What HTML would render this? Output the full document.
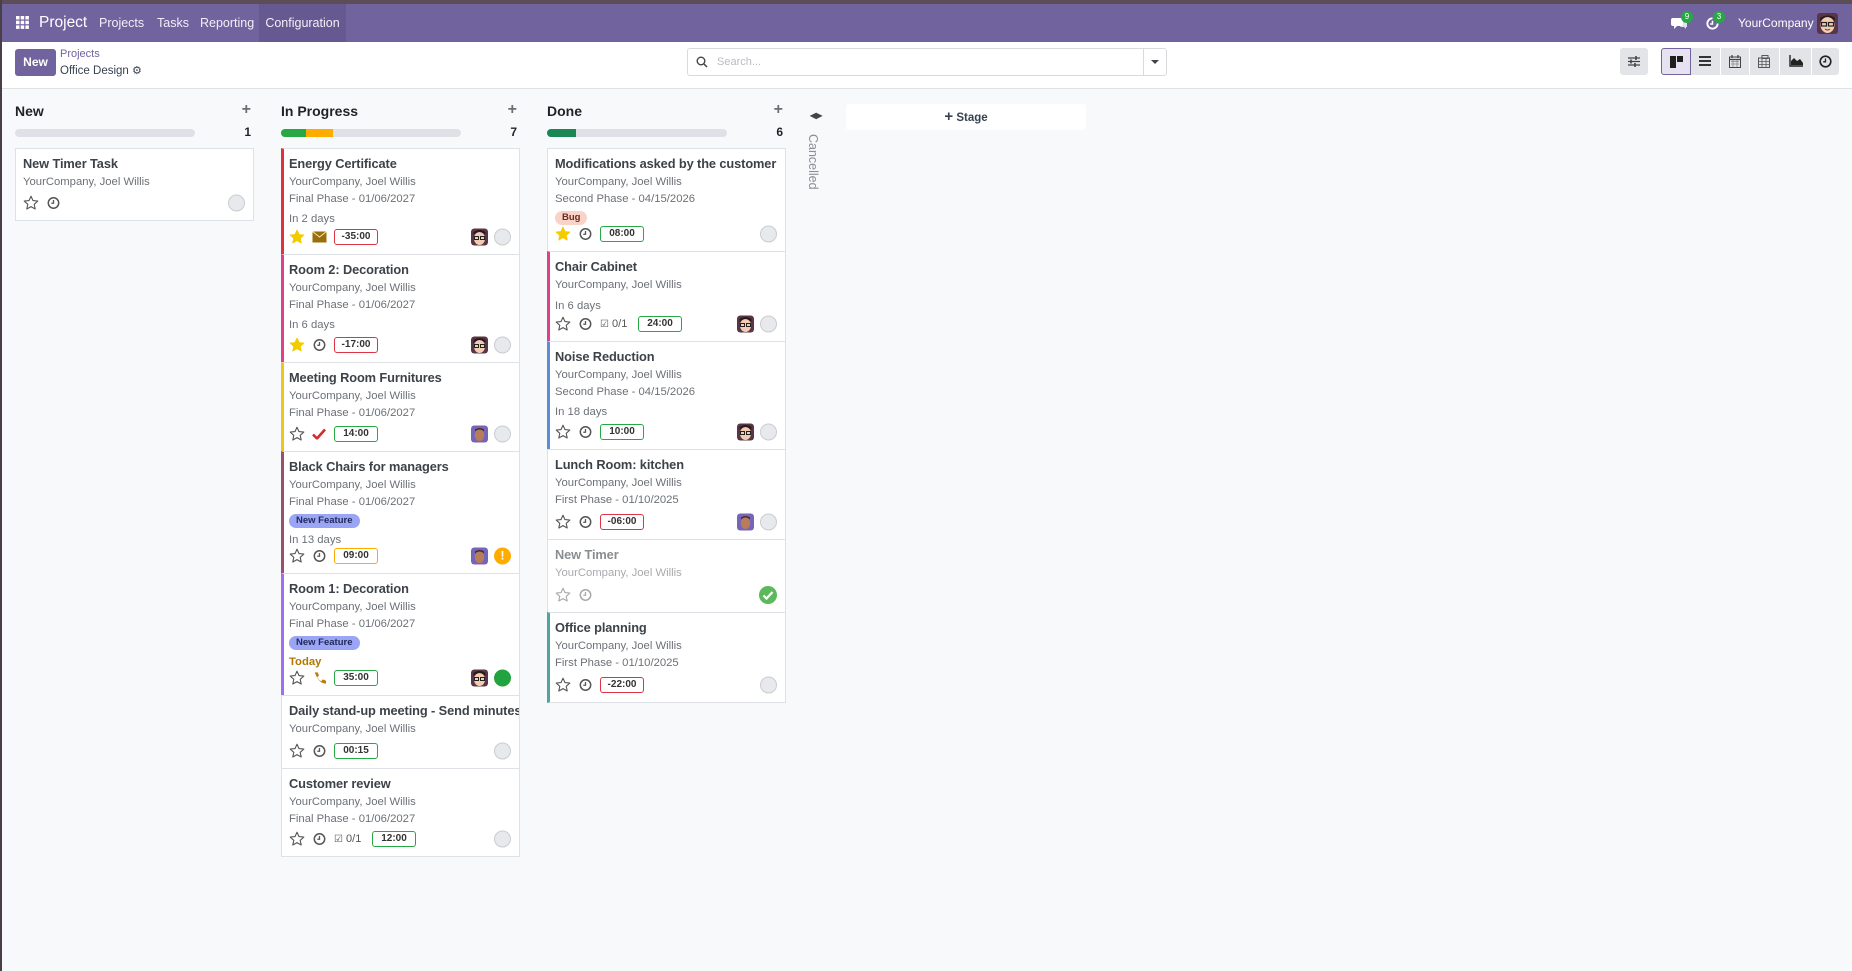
<!DOCTYPE html>
<html><head><meta charset="utf-8"><style>
*{box-sizing:border-box;margin:0;padding:0}
body{width:1852px;height:971px;overflow:hidden;background:#f8f9fa;font-family:"Liberation Sans",sans-serif;position:relative;color:#374151}
.abs{position:absolute}
#topdark{left:0;top:0;width:1852px;height:4px;background:#5b4e58}
#leftdark{left:0;top:0;width:2px;height:971px;background:#4a3f48;z-index:5}
#nav{left:0;top:4px;width:1852px;height:38px;background:#71639e;color:#fff}
#nav .it{position:absolute;top:0;height:38px;line-height:38px;font-size:12.5px;color:#f1eff7}
#cp{left:0;top:42px;width:1852px;height:47px;background:#fff;border-bottom:1px solid #dee2e6}
.btn{position:absolute;top:48px;height:27px;background:#e2e4e8;border-radius:3px}
.col{position:absolute;top:100px;width:239px}
.col h3{position:absolute;top:3px;left:0;font-size:14px;font-weight:bold;color:#1f2328}
.col .plus{position:absolute;top:1px;right:3px;font-size:16px;color:#6b6f75;font-weight:bold}
.col .bar{position:absolute;top:29px;left:0;width:180px;height:8px;background:#dee2e6;border-radius:4px;overflow:hidden}
.col .cnt{position:absolute;top:25px;right:3px;font-size:12px;font-weight:bold;color:#1f2328}
.cards{position:absolute;top:49px;left:0;width:239px}
.card{position:relative;background:#fff;border:1px solid #dee2e6;margin-top:-1px;padding:5px 8px 0 7px;overflow:hidden}
.card.lb{border-left:3px solid}
.t{font-size:12.8px;font-weight:bold;color:#3d4248;line-height:20px;white-space:nowrap;letter-spacing:-0.1px}
.m{font-size:11.3px;color:#6c7177;line-height:16.5px;white-space:nowrap}
.d{font-size:11.3px;color:#6c7177;line-height:16px;margin-top:4px}
.tag{display:inline-block;font-size:9.5px;font-weight:bold;border-radius:8px;padding:0 7px;line-height:14px;margin-top:3px}
.nf{background:#9aa5f5;color:#22295a}
.bug{background:#f9d3c8;color:#6b2a1a}
.ft{position:absolute;left:7px;right:8px;bottom:5px;height:24px}
.ft>*{position:absolute;top:50%;transform:translateY(-50%)}
.bd{left:45px;width:44px;height:16px;border:1px solid;border-radius:3px;font-size:10px;text-align:center;line-height:14px;color:#333;font-weight:bold}
.g{border-color:#28a745}.r{border-color:#dc3545}.o{border-color:#ffac00}
.st{right:0;width:17px;height:17px;border-radius:50%;background:#e7e9ec;border:1px solid #c9ccd1}
.av{right:23px;width:17px;height:17px;border-radius:3px}
.sub{font-size:11px;color:#555}
</style></head><body>
<div class="abs" id="topdark"></div><div class="abs" id="leftdark"></div>
<div class="abs" id="nav">
 <svg class="abs" style="left:16px;top:12px" width="13" height="13" viewBox="0 0 13 13" fill="#fff"><rect x="0" y="0" width="3.5" height="3.5"/><rect x="4.7" y="0" width="3.5" height="3.5"/><rect x="9.4" y="0" width="3.5" height="3.5"/><rect x="0" y="4.7" width="3.5" height="3.5"/><rect x="4.7" y="4.7" width="3.5" height="3.5"/><rect x="9.4" y="4.7" width="3.5" height="3.5"/><rect x="0" y="9.4" width="3.5" height="3.5"/><rect x="4.7" y="9.4" width="3.5" height="3.5"/><rect x="9.4" y="9.4" width="3.5" height="3.5"/></svg>
 <div class="it" style="left:39px;font-size:15.5px;color:#fff">Project</div>
 <div class="it" style="left:99px">Projects</div>
 <div class="it" style="left:157px">Tasks</div>
 <div class="it" style="left:200px">Reporting</div>
 <div class="it" style="left:259px;width:87px;background:#665991;text-align:center">Configuration</div>
 <svg class="abs" style="left:1671px;top:12px" width="16" height="14" viewBox="0 0 16 14"><path d="M2 2h8a2 2 0 0 1 2 2v4a2 2 0 0 1-2 2H6l-3 3v-3H2a2 2 0 0 1-2-2V4a2 2 0 0 1 2-2z" fill="#fff"/><path d="M13 5h1a2 2 0 0 1 2 2v4l-1 0v2l-2-2h-4" fill="#fff" opacity=".8"/></svg>
 <div class="abs" style="left:1681px;top:7px;width:12px;height:12px;border-radius:6px;background:#28a745;font-size:8px;line-height:12px;text-align:center;color:#fff">9</div>
 <svg class="abs" style="left:1705px;top:12px" width="15" height="15" viewBox="0 0 16 16"><path d="M13.5 8A5.5 5.5 0 1 1 8 2.5" fill="none" stroke="#fff" stroke-width="2"/><path d="M8 5v3.5h-2.5" fill="none" stroke="#fff" stroke-width="1.6"/></svg>
 <div class="abs" style="left:1713px;top:7px;width:12px;height:12px;border-radius:6px;background:#28a745;font-size:8px;line-height:12px;text-align:center;color:#fff">3</div>
 <div class="it" style="left:1738px;color:#fff;font-size:12px">YourCompany</div>
 <svg class="abs" style="left:1817px;top:9px;border-radius:3px" width="21" height="21" viewBox="0 0 21 21"><rect width="21" height="21" fill="#5a3547"/><ellipse cx="10.5" cy="12" rx="7" ry="8" fill="#f3cdb2"/><path d="M3 8q7-8 15 0v-3q-7-5-15 0z" fill="#2b1a1a"/><rect x="4.5" y="9.5" width="5" height="3.5" fill="none" stroke="#222" stroke-width="1.2"/><rect x="11.5" y="9.5" width="5" height="3.5" fill="none" stroke="#222" stroke-width="1.2"/><path d="M8 16q2.5 2 5 0" stroke="#7a3a2a" fill="none"/></svg>
</div>
<div class="abs" id="cp">
 <div class="abs" style="left:15px;top:7px;width:41px;height:27px;background:#71639e;border-radius:3px;color:#fff;font-size:12px;font-weight:bold;line-height:27px;text-align:center">New</div>
 <div class="abs" style="left:60px;top:6px;font-size:11px;color:#71639e">Projects</div>
 <div class="abs" style="left:60px;top:22px;font-size:11.5px;color:#374151">Office Design <span style="font-size:11px;color:#374151">&#9881;</span></div>
 <div class="abs" style="left:687px;top:6px;width:480px;height:28px;border:1px solid #d8dadd;border-radius:3px"></div>
 <svg class="abs" style="left:696px;top:14px" width="12" height="12" viewBox="0 0 12 12"><circle cx="5" cy="5" r="3.8" fill="none" stroke="#444" stroke-width="1.4"/><path d="M8 8l3 3" stroke="#444" stroke-width="1.5"/></svg>
 <div class="abs" style="left:717px;top:14px;font-size:11px;color:#b7bbc0">Search...</div>
 <div class="abs" style="left:1143px;top:7px;width:1px;height:26px;background:#d8dadd"></div>
 <div class="abs" style="left:1151px;top:18px;width:0;height:0;border-left:4px solid transparent;border-right:4px solid transparent;border-top:4px solid #444"></div>
</div>
<div class="btn" style="left:1620px;width:28px"><svg style="position:absolute;left:8px;top:8px" width="12" height="11" viewBox="0 0 12 11" stroke="#444" stroke-width="1.3"><path d="M0 2h12M0 5.5h12M0 9h12"/><path d="M8 0v4M3 3.5v4M7 7v4" stroke-width="1.6"/></svg></div>
<div class="btn" style="left:1661px;width:30px;background:#e6e2f0;border:1px solid #71639e;border-radius:3px 0 0 3px"><div class="abs" style="left:8px;top:7px;width:6px;height:12px;background:#1f1f1f"></div><div class="abs" style="left:15px;top:7px;width:6px;height:6px;background:#1f1f1f"></div></div>
<div class="btn" style="left:1691px;width:29px;border-radius:0"><div class="abs" style="left:8px;top:8px;width:12px;height:10px;background:repeating-linear-gradient(#333 0 2px,transparent 2px 4px)"></div></div>
<div class="btn" style="left:1721px;width:28px;border-radius:0"><svg style="position:absolute;left:8px;top:7px" width="12" height="13" viewBox="0 0 12 13"><rect x="0.5" y="2" width="11" height="10.5" fill="none" stroke="#444"/><path d="M0 4.5h12M3 0v3M9 0v3" stroke="#444" stroke-width="1.3"/><path d="M2 6.5h8M2 9h8M4 5v7M8 5v7" stroke="#888" stroke-width=".8"/></svg></div>
<div class="btn" style="left:1750px;width:29px;border-radius:0"><svg style="position:absolute;left:8px;top:7px" width="13" height="13" viewBox="0 0 13 13"><rect x="0.5" y="3" width="11" height="9.5" fill="none" stroke="#555"/><rect x="4" y="0.5" width="6" height="3" fill="none" stroke="#555"/><path d="M0.5 6.5h11M0.5 9.5h11M4 3v10M8 3v10" stroke="#555" stroke-width=".8"/></svg></div>
<div class="btn" style="left:1780px;width:31px;border-radius:0"><svg style="position:absolute;left:9px;top:7px" width="14" height="12" viewBox="0 0 14 12"><path d="M1 0v11h13" stroke="#222" fill="none" stroke-width="1.4"/><path d="M2 10V6l3-3 3 3 3-2 3 4v2z" fill="#222"/></svg></div>
<div class="btn" style="left:1812px;width:27px;border-radius:0 3px 3px 0"><svg style="position:absolute;left:7px;top:7px" width="13" height="13" viewBox="0 0 13 13"><circle cx="6.5" cy="6.5" r="5.3" fill="none" stroke="#222" stroke-width="1.6"/><path d="M6.5 3.5v3.3h-2.3" fill="none" stroke="#222" stroke-width="1.3"/></svg></div>

<div class="col" style="left:15px"><h3>New</h3><div class="plus">+</div><div class="bar"></div><div class="cnt">1</div>
<div class="cards" id="c1"></div></div>
<div class="col" style="left:281px"><h3>In Progress</h3><div class="plus">+</div><div class="bar"><div style="position:absolute;left:0;top:0;height:8px;width:25px;background:#28a745"></div><div style="position:absolute;left:25px;top:0;height:8px;width:27px;background:#ffac00"></div></div><div class="cnt">7</div>
<div class="cards" id="c2"></div></div>
<div class="col" style="left:547px"><h3>Done</h3><div class="plus">+</div><div class="bar"><div style="position:absolute;left:0;top:0;height:8px;width:29px;background:#1a8754"></div></div><div class="cnt">6</div>
<div class="cards" id="c3"></div></div>
<div class="abs" style="left:810px;top:111px;font-size:8px;color:#444;font-weight:bold">&#9664;&#9654;</div>
<div class="abs" style="left:806px;top:134px;writing-mode:vertical-rl;font-size:12.5px;color:#8a8f95">Cancelled</div>
<div class="abs" style="left:846px;top:104px;width:240px;height:26px;background:#fff;border-radius:3px;text-align:center;line-height:26px;font-size:11.5px;color:#374151;font-weight:bold"><span style="font-size:15px">+</span> Stage</div>

<svg width="0" height="0" style="position:absolute"><defs>
<symbol id="star" viewBox="0 0 16 16"><path d="M8 1.2l2 4.4 4.8.5-3.6 3.2 1 4.7L8 11.6 3.8 14l1-4.7L1.2 6.1 6 5.6z" fill="none" stroke="#555" stroke-width="1.1" stroke-linejoin="round"/></symbol>
<symbol id="starf" viewBox="0 0 16 16"><path d="M8 1.2l2 4.4 4.8.5-3.6 3.2 1 4.7L8 11.6 3.8 14l1-4.7L1.2 6.1 6 5.6z" fill="#f3cc00" stroke="#f3cc00" stroke-width="1" stroke-linejoin="round"/></symbol>
<symbol id="clk" viewBox="0 0 14 14"><circle cx="7" cy="7" r="5.6" fill="none" stroke="#555" stroke-width="1.6"/><path d="M7 3.8v3.5H4.6" fill="none" stroke="#555" stroke-width="1.4"/></symbol>
<symbol id="av1" viewBox="0 0 17 17"><rect width="17" height="17" rx="3" fill="#5a3547"/><ellipse cx="8.5" cy="10" rx="5.5" ry="6.5" fill="#f3cdb2"/><path d="M2.5 6.5q6-6 12 0v-3q-6-4-12 0z" fill="#2b1a1a"/><path d="M3.5 8h4v3h-4zM9.5 8h4v3h-4z" fill="none" stroke="#222"/></symbol>
<symbol id="av2" viewBox="0 0 17 17"><rect width="17" height="17" rx="3" fill="#7565b8"/><ellipse cx="8.5" cy="9.5" rx="4.8" ry="6" fill="#b77c5b"/><path d="M4 6q4.5-4 9 0v-2q-4.5-3-9 0z" fill="#4a2b1e"/></symbol>
</defs></svg>

<script>
const S='<svg style="left:0" width="16" height="16"><use href="#star"/></svg>';
const SF='<svg style="left:0" width="16" height="16"><use href="#starf"/></svg>';
const CK='<svg style="left:24px" width="13" height="13"><use href="#clk"/></svg>';
const ENV='<svg style="left:23px" width="15" height="11" viewBox="0 0 14 11"><rect width="14" height="11" fill="#9c6e0a"/><path d="M0 0l7 5.5L14 0" fill="none" stroke="#f7e6b0" stroke-width="1"/></svg>';
const CHK='<svg style="left:23px" width="14" height="11" viewBox="0 0 14 11"><path d="M1 6l4 4 8-9" fill="none" stroke="#d52b2b" stroke-width="2.6"/></svg>';
const PH='<svg style="left:24px" width="13" height="13" viewBox="0 0 14 14"><path d="M2 1l3 0 1.5 3.5-2 1.5q1.5 3 4.5 4.5l1.5-2 3.5 1.5v3q-8 0-12-12z" fill="#c07a00"/></svg>';
const A1='<svg class="av" viewBox="0 0 17 17"><use href="#av1"/></svg>';
const A2='<svg class="av" viewBox="0 0 17 17"><use href="#av2"/></svg>';
const ST='<div class="st"></div>';
function bd(t,c,l){return '<div class="bd '+c+'" style="left:'+(l||45)+'px">'+t+'</div>';}
const SUB='<div class="sub" style="left:45px"><span style="font-size:10px">&#9745;</span> 0/1</div>';
function card(h,col,body,foot){
 return '<div class="card'+(col?' lb':'')+'" style="height:'+h+'px;'+(col?'border-left-color:'+col+';padding-left:5px;':'')+'">'+body+'<div class="ft"'+(col?' style="left:5px"':'')+'>'+foot+'</div></div>';
}
const CO='<div class="m">YourCompany, Joel Willis</div>';
const FP='<div class="m">Final Phase - 01/06/2027</div>';
const SP='<div class="m">Second Phase - 04/15/2026</div>';
const FIP='<div class="m">First Phase - 01/10/2025</div>';
function T(s){return '<div class="t">'+s+'</div>';}
function D(s,c){return '<div class="d"'+(c?' style="color:'+c+';font-weight:bold"':'')+'>'+s+'</div>';}
document.getElementById('c1').innerHTML=card(73,null,T('New Timer Task')+CO,S+CK+ST);
document.getElementById('c2').innerHTML=
 card(107,'#e0313e',T('Energy Certificate')+CO+FP+D('In 2 days'),SF+ENV+bd('-35:00','r')+A1+ST)+
 card(109,'#e23f8a',T('Room 2: Decoration')+CO+FP+D('In 6 days'),SF+CK+bd('-17:00','r')+A1+ST)+
 card(90,'#f0c419',T('Meeting Room Furnitures')+CO+FP,S+CHK+bd('14:00','g')+A2+ST)+
 card(123,'#9b4f6e',T('Black Chairs for managers')+CO+FP+'<span class="tag nf">New Feature</span>'+D('In 13 days'),S+CK+bd('09:00','o')+A2+'<div style="right:0;width:17px;height:17px;border-radius:50%;background:#ffac00;color:#fff;font-weight:bold;font-size:12px;text-align:center;line-height:17px">!</div>')+
 card(123,'#a06ef0',T('Room 1: Decoration')+CO+FP+'<span class="tag nf">New Feature</span>'+D('Today','#b07800'),S+PH+bd('35:00','g')+A1+'<div class="st" style="background:#21a33f;border-color:#21a33f"></div>')+
 card(74,null,T('Daily stand-up meeting - Send minutes')+CO,S+CK+bd('00:15','g')+ST)+
 card(89,null,T('Customer review')+CO+FP,S+CK+SUB+bd('12:00','g',83)+ST);
document.getElementById('c3').innerHTML=
 card(104,null,T('Modifications asked by the customer')+CO+SP+'<span class="tag bug">Bug</span>',SF+CK+bd('08:00','g')+ST)+
 card(91,'#e23f8a',T('Chair Cabinet')+CO+D('In 6 days'),S+CK+SUB+bd('24:00','g',83)+A1+ST)+
 card(109,'#5b8ed6',T('Noise Reduction')+CO+SP+D('In 18 days'),S+CK+bd('10:00','g')+A1+ST)+
 card(91,null,T('Lunch Room: kitchen')+CO+FIP,S+CK+bd('-06:00','r')+A2+ST)+
 card(74,null,'<div style="opacity:.6">'+T('New Timer')+CO+'</div>','<svg style="left:0;opacity:.5" width="16" height="16"><use href="#star"/></svg><svg style="left:24px;opacity:.5" width="13" height="13"><use href="#clk"/></svg><svg style="right:0" width="18" height="18" viewBox="0 0 18 18"><circle cx="9" cy="9" r="9" fill="#5cb85c"/><path d="M4.5 9.5l3 3 6-6.5" fill="none" stroke="#fff" stroke-width="2.2"/></svg>')+
 card(91,'#4ea69f',T('Office planning')+CO+FIP,S+CK+bd('-22:00','r')+ST);
</script>
</body></html>
